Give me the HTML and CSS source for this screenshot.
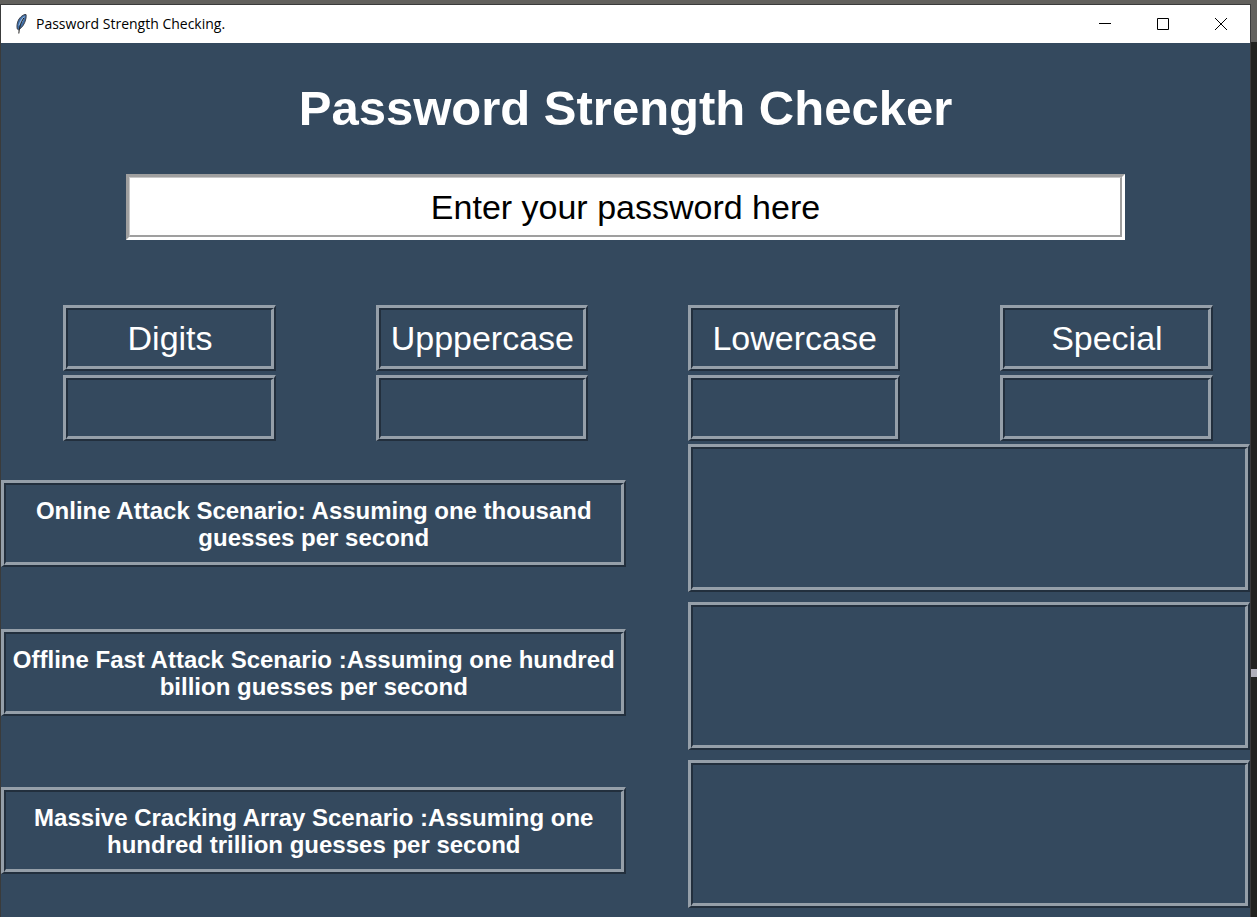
FILE: index.html
```html
<!DOCTYPE html>
<html lang="en">
<head>
<meta charset="utf-8">
<title>Password Strength Checking.</title>
<link rel="stylesheet" href="styles.css">
</head>
<body>
<div class="desktop">
  <div class="window">
    <header class="titlebar">
      <svg class="feather" viewBox="0 0 14 22" aria-hidden="true">
        <path d="M12 1.500C9.500 1.300 6 4 4.500 7c-1.300 2.600-2 6-1.200 9l1.200.8C8.500 14.500 10.800 10.500 11.800 6c.4-1.800.5-3.200.2-4.500z" fill="#3f6da5" stroke="#3a3f4a" stroke-width="1"/>
        <path d="M10.800 2.800C8 4.500 5.500 8 4.300 13l1.700-1C8.500 9.500 10.200 6.300 10.800 2.800z" fill="#8fb4e0"/>
        <path d="M9.800 5C7 9 5.200 14 4.800 20.500" fill="none" stroke="#222" stroke-width="1"/>
      </svg>
      <span class="caption">Password Strength Checking.</span>
      <div class="controls">
        <button class="control" type="button" aria-label="Minimize"><svg viewBox="0 0 12 12"><path d="M0 5.500h12"/></svg></button>
        <button class="control" type="button" aria-label="Maximize"><svg viewBox="0 0 12 12"><path d="M.5.5h11v11H.5z"/></svg></button>
        <button class="control" type="button" aria-label="Close"><svg viewBox="0 0 12 12"><path d="M0 0l12 12M12 0L0 12"/></svg></button>
      </div>
    </header>
    <main class="content">
      <h1 class="heading">Password Strength Checker</h1>
      <div class="ridge entry">
        <input class="password" type="text" value="Enter your password here" aria-label="Password">
      </div>
      <section class="counts">
        <div class="ridge cell">Digits</div>
        <div class="ridge cell">Upppercase</div>
        <div class="ridge cell">Lowercase</div>
        <div class="ridge cell">Special</div>
        <output class="ridge cell" aria-label="Digits"></output>
        <output class="ridge cell" aria-label="Upppercase"></output>
        <output class="ridge cell" aria-label="Lowercase"></output>
        <output class="ridge cell" aria-label="Special"></output>
      </section>
      <section class="scenarios">
        <div class="names">
          <div class="ridge name">Online Attack Scenario: Assuming one thousand<br>guesses per second</div>
          <div class="ridge name">Offline Fast Attack Scenario :Assuming one hundred<br>billion guesses per second</div>
          <div class="ridge name">Massive Cracking Array Scenario :Assuming one<br>hundred trillion guesses per second</div>
        </div>
        <div class="results">
          <output class="ridge result"></output>
          <output class="ridge result"></output>
          <output class="ridge result"></output>
        </div>
      </section>
    </main>
  </div>
  <div class="backdrop"><div class="handle"></div></div>
</div>
</body>
</html>
```
FILE: styles.css
```css
* { box-sizing: border-box; }

body {
  margin: 0;
  font-family: "Liberation Sans", Arial, sans-serif;
  color: #fff;
}

.desktop {
  display: flex;
  min-height: 100vh;
  padding-top: 4px;
  background: linear-gradient(#62615d 0 42px, #22231f 42px);
}

.window {
  flex: 1;
  display: flex;
  flex-direction: column;
  border: 1px solid #3a3b3b;
  border-bottom: 0;
  background: #34495e;
}

.backdrop { width: 6px; padding-top: 665px; }
.handle { height: 8px; background: #b0b0b8; }

.titlebar {
  display: flex;
  align-items: center;
  height: 38px;
  padding-left: 13px;
  background: #fff;
  color: #000;
}

.feather { width: 14px; height: 22px; }

.caption {
  margin-left: 8px;
  font: 14px/20px "Open Sans", sans-serif;
}

.controls { display: flex; margin-left: auto; height: 100%; }

.control {
  display: flex;
  align-items: center;
  justify-content: center;
  width: 58px;
  padding: 0;
  border: 0;
  background: none;
}

.control svg {
  width: 12px;
  height: 12px;
  fill: none;
  stroke: #000;
  stroke-width: 1;
}

.heading {
  margin: 0;
  padding: 37px 0;
  font-size: 49px;
  line-height: 57px;
  text-align: center;
}

.ridge {
  position: relative;
  display: block;
  border: 3px solid;
  border-color: #959fa9 #222f3d #222f3d #959fa9;
  border-right-width: 2px;
  border-bottom-width: 2px;
}

.ridge::after {
  content: "";
  position: absolute;
  inset: 0;
  border: 2px solid;
  border-color: #222f3d #959fa9 #959fa9 #222f3d;
  border-right-width: 3px;
  border-bottom-width: 3px;
  pointer-events: none;
}

.entry {
  width: 80%;
  height: 66px;
  margin: 0 auto 65px;
  border-width: 3px;
  border-color: #9f9f9f #fff #fff #9f9f9f;
}

.entry::after {
  border-width: 2px;
  border-color: #c8c8c8 #9f9f9f #9f9f9f #c8c8c8;
  border-top-width: 1px;
  border-left-width: 1px;
}

.password {
  display: block;
  width: 100%;
  height: 100%;
  padding: 0;
  border: 0;
  outline: 0;
  background: #fff;
  color: #000;
  font: 34px "Liberation Sans", Arial, sans-serif;
  text-align: center;
}

.counts {
  display: grid;
  grid-template-columns: 17fr 17fr 17fr 17fr;
  column-gap: 8%;
  row-gap: 4px;
  margin: 0 3% 0 5%;
}

.cell {
  height: 66px;
  font-size: 34px;
  line-height: 60px;
  text-align: center;
}

.counts { column-gap: 100px; }

@media (max-width: 900px) {
  .counts { column-gap: 4%; }
}

.scenarios {
  display: grid;
  grid-template-columns: 50% 45%;
  column-gap: 5%;
  padding: 3px 0 8px;
}

.names {
  display: flex;
  flex-direction: column;
  gap: 62px;
  padding-top: 36px;
}

.name {
  padding: 14px 0;
  font-size: 24px;
  font-weight: bold;
  line-height: 27px;
  text-align: center;
  white-space: nowrap;
}

.name:last-child { margin-top: 9px; }

.results {
  display: flex;
  flex-direction: column;
  gap: 10px;
}

.result { height: 148px; }
```
